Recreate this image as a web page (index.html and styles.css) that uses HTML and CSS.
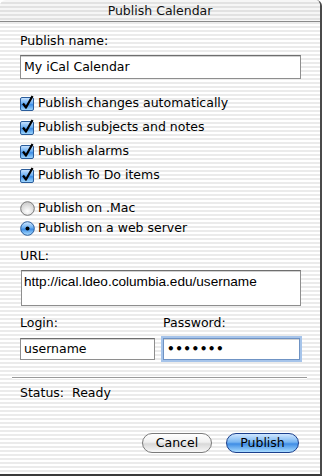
FILE: index.html
```html
<!DOCTYPE html>
<html>
<head>
<meta charset="utf-8">
<link rel="stylesheet" href="styles.css">
</head>
<body>
<div class="window">
  <div class="titlebar">Publish Calendar</div>
  <div class="content">
    <div class="label first">Publish name:</div>
    <div class="field name-field">My iCal Calendar</div>

    <div class="checks">
      <div class="row"><span class="check"><svg width="16" height="16" viewBox="0 0 16 16"><defs><linearGradient id="cb" x1="0" y1="0" x2="0" y2="1"><stop offset="0" stop-color="#cfe6ff"/><stop offset="0.45" stop-color="#6aaef2"/><stop offset="0.55" stop-color="#3d8ee6"/><stop offset="1" stop-color="#a8dcff"/></linearGradient></defs><rect x="0.5" y="2.5" width="13" height="13" rx="1.5" fill="url(#cb)" stroke="#2a5c9a"/><path d="M3 8.5 L6 12.5 L12.5 1" fill="none" stroke="#000" stroke-width="2.2" stroke-linejoin="round"/></svg></span>Publish changes automatically</div>
      <div class="row"><span class="check"><svg width="16" height="16" viewBox="0 0 16 16"><rect x="0.5" y="2.5" width="13" height="13" rx="1.5" fill="url(#cb)" stroke="#2a5c9a"/><path d="M3 8.5 L6 12.5 L12.5 1" fill="none" stroke="#000" stroke-width="2.2" stroke-linejoin="round"/></svg></span>Publish subjects and notes</div>
      <div class="row"><span class="check"><svg width="16" height="16" viewBox="0 0 16 16"><rect x="0.5" y="2.5" width="13" height="13" rx="1.5" fill="url(#cb)" stroke="#2a5c9a"/><path d="M3 8.5 L6 12.5 L12.5 1" fill="none" stroke="#000" stroke-width="2.2" stroke-linejoin="round"/></svg></span>Publish alarms</div>
      <div class="row"><span class="check"><svg width="16" height="16" viewBox="0 0 16 16"><rect x="0.5" y="2.5" width="13" height="13" rx="1.5" fill="url(#cb)" stroke="#2a5c9a"/><path d="M3 8.5 L6 12.5 L12.5 1" fill="none" stroke="#000" stroke-width="2.2" stroke-linejoin="round"/></svg></span>Publish To Do items</div>
    </div>

    <div class="radios">
      <div class="row"><span class="radio"><svg width="15" height="15" viewBox="0 0 15 15"><defs><radialGradient id="rw" cx="0.5" cy="0.7" r="0.7"><stop offset="0" stop-color="#ffffff"/><stop offset="1" stop-color="#c8c8c8"/></radialGradient></defs><circle cx="7.5" cy="7.5" r="6.8" fill="url(#rw)" stroke="#777"/></svg></span>Publish on .Mac</div>
      <div class="row"><span class="radio"><svg width="15" height="15" viewBox="0 0 15 15"><defs><linearGradient id="rb" x1="0" y1="0" x2="0" y2="1"><stop offset="0" stop-color="#d4eaff"/><stop offset="0.45" stop-color="#6aaef2"/><stop offset="0.55" stop-color="#3d8ee6"/><stop offset="1" stop-color="#b0e0ff"/></linearGradient></defs><circle cx="7.5" cy="7.5" r="6.8" fill="url(#rb)" stroke="#2a5c9a"/><circle cx="7.5" cy="7.5" r="2" fill="#000"/></svg></span>Publish on a web server</div>
    </div>

    <div class="label url-label">URL:</div>
    <div class="field url-field">http://ical.ldeo.columbia.edu/username</div>

    <div class="creds">
      <div class="col login">
        <div class="label">Login:</div>
        <div class="field small-field">username</div>
      </div>
      <div class="col password">
        <div class="label">Password:</div>
        <div class="field small-field focused">&#8226;&#8226;&#8226;&#8226;&#8226;&#8226;&#8226;</div>
      </div>
    </div>
  </div>
  <div class="separator"></div>
  <div class="content">
    <div class="status"><span>Status:</span><span>Ready</span></div>
    <div class="buttons">
      <div class="btn cancel">Cancel</div>
      <div class="btn publish">Publish</div>
    </div>
  </div>
</div>
</body>
</html>
```

FILE: styles.css
```css
html, body {
  margin: 0;
  padding: 0;
}
body {
  width: 322px;
  height: 476px;
  overflow: hidden;
  font-family: "DejaVu Sans", "Lucida Grande", sans-serif;
  font-size: 12.5px;
  color: #000;
}
.window {
  width: 322px;
  height: 476px;
  box-sizing: border-box;
  border-right: 2px solid #4a4a4a;
  border-bottom: 2px solid #3a3a3a;
  border-radius: 6px 6px 0 0;
  background: repeating-linear-gradient(to bottom, #ffffff 0 2px, #ebebeb 2px 4px);
  display: flex;
  flex-direction: column;
  overflow: hidden;
}
.titlebar {
  height: 21px;
  border-bottom: 1px solid #8a8a8a;
  background: repeating-linear-gradient(to bottom, #f6f6f6 0 2px, #e2e2e2 2px 4px);
  text-align: center;
  font-size: 12.5px;
  line-height: 22px;
  color: #111;
}
.content {
  padding: 0 20px;
  display: flex;
  flex-direction: column;
}
.label {
  line-height: 16px;
}
.label.first {
  margin-top: 11px;
}
.field {
  background: #fff;
  border: 1px solid #8e8e8e;
  border-top-color: #6e6e6e;
  box-shadow: inset 0 1px 0 #d0d0d0;
  box-sizing: border-box;
}
.name-field {
  margin-top: 6px;
  width: 281px;
  height: 24px;
  line-height: 22px;
  padding-left: 3px;
}
.checks {
  margin-top: 16px;
  display: flex;
  flex-direction: column;
  gap: 8px;
}
.row {
  display: flex;
  align-items: center;
  height: 16px;
  line-height: 16px;
}
.check {
  width: 18px;
  height: 16px;
  display: inline-flex;
  align-items: flex-end;
}
.check svg {
  display: block;
}
.radios {
  margin-top: 17px;
  display: flex;
  flex-direction: column;
  gap: 4px;
}
.radio {
  width: 18px;
  height: 16px;
  display: inline-flex;
  align-items: center;
}
.radio svg {
  display: block;
}
.url-label {
  margin-top: 12px;
}
.url-field {
  margin-top: 6px;
  margin-left: 1px;
  width: 280px;
  height: 36px;
  padding: 3px 0 0 2px;
  font-family: "Liberation Sans", Arial, sans-serif;
  font-size: 13.6px;
  line-height: 16px;
}
.creds {
  margin-top: 9px;
  display: flex;
  gap: 8px;
}
.col {
  display: flex;
  flex-direction: column;
}
.login .small-field {
  width: 135px;
}
.password .small-field {
  width: 137px;
}
.small-field {
  margin-top: 7px;
  height: 22px;
  line-height: 20px;
  padding-left: 3px;
}
.focused {
  border: 1px solid #6f93c4;
  box-shadow: 0 0 0 2px #a6c4ea, inset 0 1px 0 #d0d0d0;
  letter-spacing: 0.5px;
  font-size: 12px;
  font-weight: bold;
}
.separator {
  margin: 17px 13px 0 12px;
  height: 0;
  border-top: 1px solid #9a9a9a;
  border-bottom: 1px solid #ffffff;
}
.status {
  margin-top: 6px;
  display: flex;
  gap: 8px;
  line-height: 16px;
}
.buttons {
  margin-top: 32px;
  display: flex;
  justify-content: flex-end;
  gap: 14px;
  padding-right: 1px;
}
.btn {
  height: 20px;
  line-height: 18px;
  box-sizing: border-box;
  border-radius: 10px;
  text-align: center;
  font-size: 12.5px;
}
.cancel {
  width: 70px;
  border: 1px solid #7a7a7a;
  background: linear-gradient(to bottom, #ffffff 0%, #f0f0f0 45%, #d8d8d8 55%, #f8f8f8 100%);
}
.publish {
  width: 73px;
  border: 1px solid #1b3f8c;
  background: linear-gradient(to bottom, #cfe6ff 0%, #79b6f2 45%, #3f8de5 55%, #a9dcff 100%);
}
```
